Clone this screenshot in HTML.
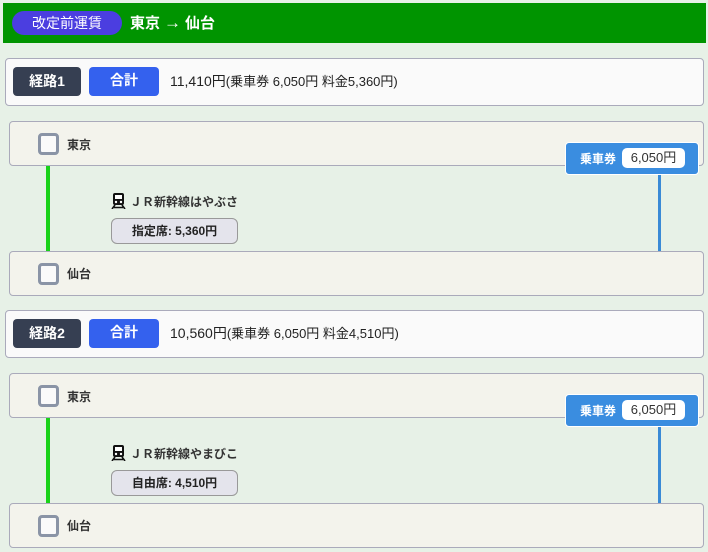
<!DOCTYPE html>
<html><head><meta charset="utf-8"><style>
*{box-sizing:border-box;margin:0;padding:0}
body{width:708px;height:552px;background:#e7f1e7;font-family:"Liberation Sans","Noto Sans CJK JP",sans-serif;position:relative;overflow:hidden;color:#333}
.a{position:absolute}
.hdr{left:3px;top:3px;width:703px;height:40px;background:#009400}
.pill{left:12px;top:11px;width:110px;height:24px;border-radius:12px;background:#4b3ee0;color:#fff;font-size:14px;line-height:24px;text-align:center}
.ttl{left:130px;top:12px;color:#fff;font-weight:bold;font-size:15px;line-height:22px}
.ttl i{font-style:normal;font-size:17px;margin:0 4px}
.sum{left:5px;width:699px;height:48px;background:#fafafa;border:1px solid #aab;border-radius:4px}
.k{width:68px;height:29px;background:#363f52;color:#fff;font-weight:bold;font-size:14px;line-height:29px;text-align:center;border-radius:4px}
.g{width:70px;height:29px;background:#3461ee;color:#fff;font-weight:bold;font-size:14px;line-height:27px;text-align:center;border-radius:4px}
.st{font-size:13px;line-height:20px;color:#222}
.st b{font-size:14px;font-weight:normal}
.stn{left:9px;width:695px;height:45px;background:#f3f3ec;border:1px solid #aab;border-radius:4px}
.cb{width:21px;height:22px;border:3px solid #8a94a6;border-radius:4px;background:#fafafa}
.sn{font-size:12px;font-weight:bold;color:#333}
.gl{left:46px;width:4px;background:#19d219}
.bl{left:658px;width:3px;background:#3a8ad6}
.tk{left:565px;width:134px;height:33px;background:#3a8de0;border:1px solid #fff;border-radius:4px;color:#fff;font-size:12px;font-weight:bold}
.tk span{position:absolute;left:56px;top:5px;width:63px;height:20px;background:#fff;color:#333;border-radius:5px;font-size:13px;line-height:20px;text-align:center;font-weight:normal}
.ln{font-size:12px;font-weight:bold;color:#333;line-height:16px}
.ln svg{vertical-align:-3px;margin-right:4px}
.seat{left:111px;width:127px;height:26px;background:#e4e4ec;border:1px solid #999;border-radius:6px;font-size:12px;font-weight:bold;line-height:24px;text-align:center;color:#222}
</style></head><body>
<div class="a hdr"></div>
<div class="a pill">改定前運賃</div>
<div class="a ttl">東京<i>→</i>仙台</div>

<!-- route 1 -->
<div class="a sum" style="top:58px"></div>
<div class="a k" style="left:13px;top:67px">経路1</div>
<div class="a g" style="left:89px;top:67px">合計</div>
<div class="a st" style="left:170px;top:71px"><b>11,410円</b>(乗車券 6,050円 料金5,360円)</div>
<div class="a gl" style="top:165px;height:87px"></div>
<div class="a bl" style="top:174px;height:78px"></div>
<div class="a stn" style="top:121px"></div>
<div class="a cb" style="left:38px;top:133px"></div>
<div class="a sn" style="left:67px;top:136px">東京</div>
<div class="a tk" style="top:142px"><div class="a" style="left:14px;top:7px">乗車券</div><span>6,050円</span></div>
<div class="a ln" style="left:111px;top:193px"><svg width="15" height="16" viewBox="0 0 15 16"><rect x="2" y="0" width="11" height="12" rx="2" fill="#111"/><rect x="4" y="2" width="7" height="4" fill="#fff"/><circle cx="5" cy="9" r="1.2" fill="#fff"/><circle cx="10" cy="9" r="1.2" fill="#fff"/><path d="M4 12 L1 16 M11 12 L14 16 M3 14.5 H12" stroke="#111" stroke-width="1.6"/></svg>ＪＲ新幹線はやぶさ</div>
<div class="a seat" style="top:218px">指定席: 5,360円</div>
<div class="a stn" style="top:251px"></div>
<div class="a cb" style="left:38px;top:263px"></div>
<div class="a sn" style="left:67px;top:265px">仙台</div>

<!-- route 2 -->
<div class="a sum" style="top:310px"></div>
<div class="a k" style="left:13px;top:319px">経路2</div>
<div class="a g" style="left:89px;top:319px">合計</div>
<div class="a st" style="left:170px;top:323px"><b>10,560円</b>(乗車券 6,050円 料金4,510円)</div>
<div class="a gl" style="top:417px;height:87px"></div>
<div class="a bl" style="top:426px;height:78px"></div>
<div class="a stn" style="top:373px"></div>
<div class="a cb" style="left:38px;top:385px"></div>
<div class="a sn" style="left:67px;top:388px">東京</div>
<div class="a tk" style="top:394px"><div class="a" style="left:14px;top:7px">乗車券</div><span>6,050円</span></div>
<div class="a ln" style="left:111px;top:445px"><svg width="15" height="16" viewBox="0 0 15 16"><rect x="2" y="0" width="11" height="12" rx="2" fill="#111"/><rect x="4" y="2" width="7" height="4" fill="#fff"/><circle cx="5" cy="9" r="1.2" fill="#fff"/><circle cx="10" cy="9" r="1.2" fill="#fff"/><path d="M4 12 L1 16 M11 12 L14 16 M3 14.5 H12" stroke="#111" stroke-width="1.6"/></svg>ＪＲ新幹線やまびこ</div>
<div class="a seat" style="top:470px">自由席: 4,510円</div>
<div class="a stn" style="top:503px"></div>
<div class="a cb" style="left:38px;top:515px"></div>
<div class="a sn" style="left:67px;top:517px">仙台</div>
</body></html>
